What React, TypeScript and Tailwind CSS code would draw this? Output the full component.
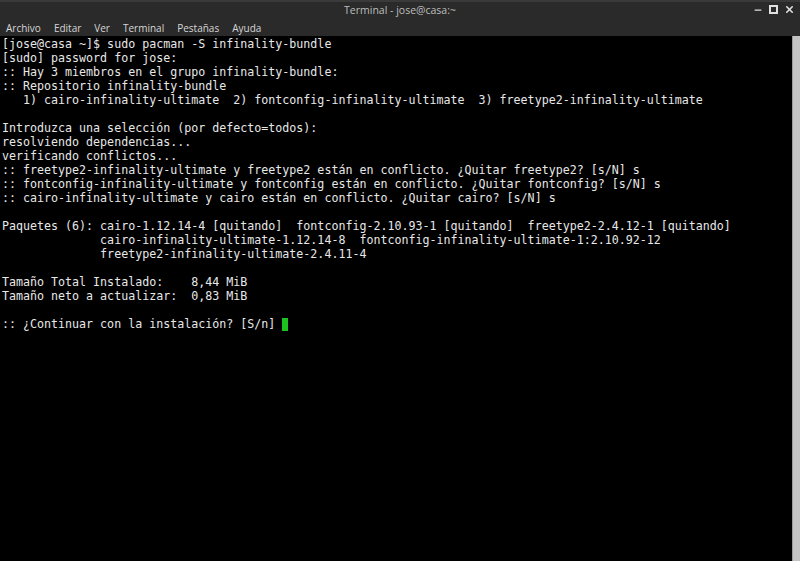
import { Minus, X } from "lucide-react";

const lines = [
  "[jose@casa ~]$ sudo pacman -S infinality-bundle",
  "[sudo] password for jose:",
  ":: Hay 3 miembros en el grupo infinality-bundle:",
  ":: Repositorio infinality-bundle",
  "   1) cairo-infinality-ultimate  2) fontconfig-infinality-ultimate  3) freetype2-infinality-ultimate",
  "",
  "Introduzca una selección (por defecto=todos):",
  "resolviendo dependencias...",
  "verificando conflictos...",
  ":: freetype2-infinality-ultimate y freetype2 están en conflicto. ¿Quitar freetype2? [s/N] s",
  ":: fontconfig-infinality-ultimate y fontconfig están en conflicto. ¿Quitar fontconfig? [s/N] s",
  ":: cairo-infinality-ultimate y cairo están en conflicto. ¿Quitar cairo? [s/N] s",
  "",
  "Paquetes (6): cairo-1.12.14-4 [quitando]  fontconfig-2.10.93-1 [quitando]  freetype2-2.4.12-1 [quitando]",
  "              cairo-infinality-ultimate-1.12.14-8  fontconfig-infinality-ultimate-1:2.10.92-12",
  "              freetype2-infinality-ultimate-2.4.11-4",
  "",
  "Tamaño Total Instalado:    8,44 MiB",
  "Tamaño neto a actualizar:  0,83 MiB",
  "",
];

const menu = ["Archivo", "Editar", "Ver", "Terminal", "Pestañas", "Ayuda"];

export default function App() {
  return (
    <div className="w-[800px] h-[561px] flex flex-col bg-black overflow-hidden font-['Open_Sans','DejaVu_Sans',sans-serif]">
      {/* title bar */}
      <div className="h-[19px] shrink-0 bg-[#2a2a2a] border-t-2 border-[#3a3a3a] flex items-center relative">
        <div className="flex-1 text-center text-[10.5px] text-[#bdbdbd] leading-none">
          Terminal - jose@casa:~
        </div>
        <div className="absolute right-[5px] top-[2px] flex items-center gap-[6px] text-[#e0e0e0]">
          <Minus className="w-[10px] h-[10px]" strokeWidth={3} />
          <div className="w-[9px] h-[9px] border-2 border-[#e0e0e0] flex items-center justify-center">
            <div className="w-[3px] h-[3px] bg-[#2a2a2a]" />
          </div>
          <X className="w-[11px] h-[11px]" strokeWidth={3.5} />
        </div>
      </div>
      {/* menu bar */}
      <div className="h-[17px] shrink-0 bg-[#2a2a2a] flex items-center pl-[6px] gap-[13px] text-[10px] text-[#d6d6d6] leading-none">
        {menu.map((m) => (
          <span key={m}>{m}</span>
        ))}
      </div>
      {/* terminal */}
      <div className="flex-1 flex">
        <div className="flex-1 pt-[1px] pl-[2px] font-['DejaVu_Sans_Mono','Liberation_Mono',monospace] text-[11.65px] leading-[14px] text-[#e8e8e8] whitespace-pre">
          {lines.map((l, i) => (
            <div key={i} className="h-[14px]">
              {l}
            </div>
          ))}
          <div className="h-[14px] flex items-center">
            <span>:: ¿Continuar con la instalación? [S/n] </span>
            <span className="inline-block w-[6px] h-[13px] bg-[#1ec21e]" />
          </div>
        </div>
        <div className="w-[8px] bg-[#c2c2c2] border-l border-[#9a9a9a]" />
      </div>
    </div>
  );
}
